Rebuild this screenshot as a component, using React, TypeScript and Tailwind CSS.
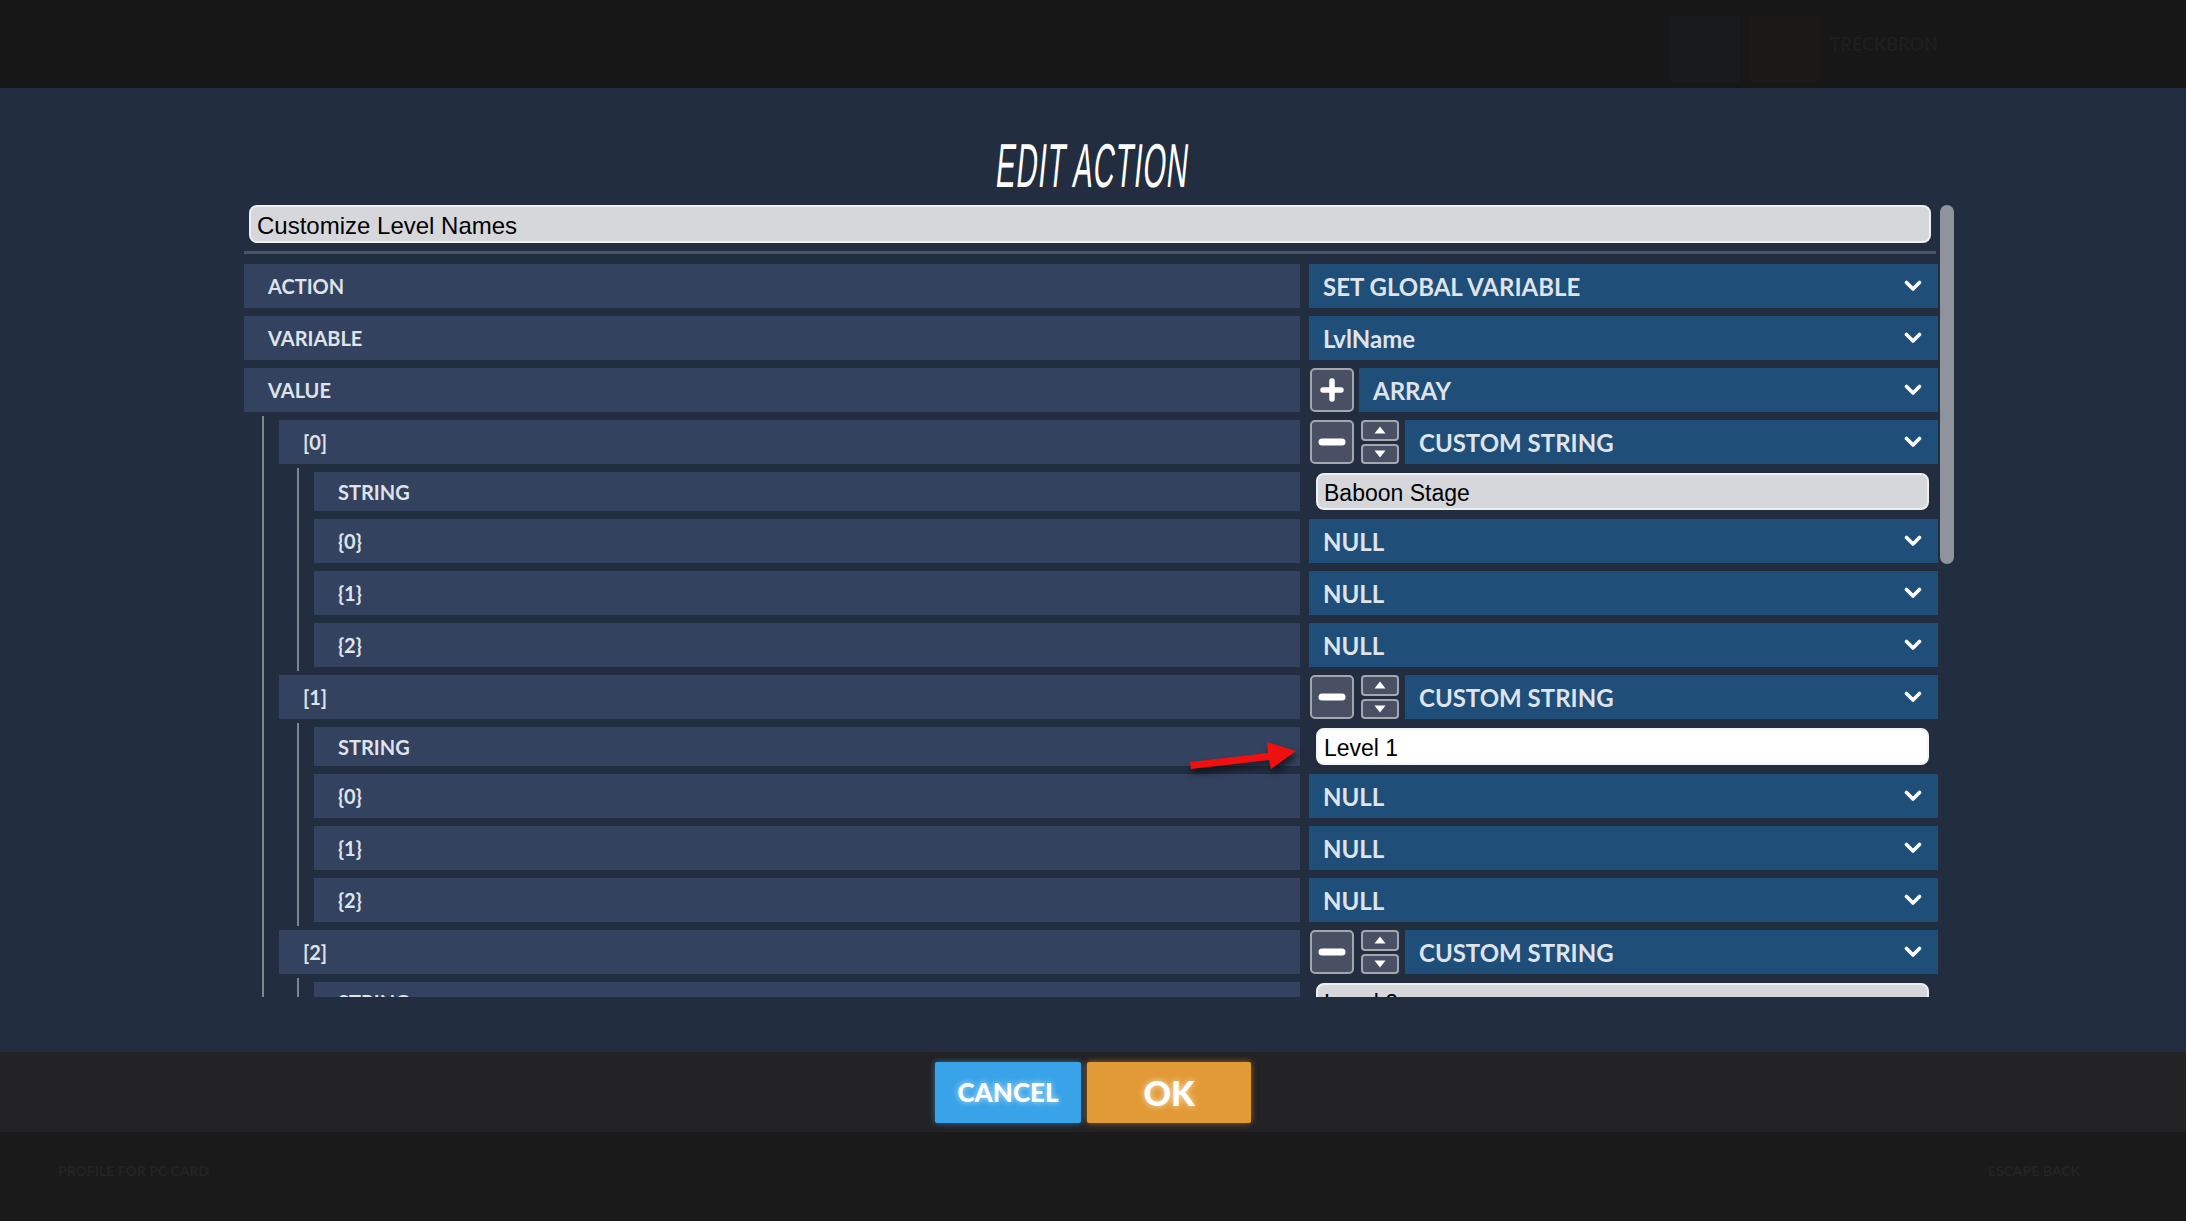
import React from 'react';

const labelFont = "font-['Lato','Noto_Sans',sans-serif] font-bold";
const inputFont = "font-['Liberation_Sans','Arial',sans-serif]";

function Chevron() {
  return (
    <svg width="18" height="12" viewBox="0 0 18 12" className="shrink-0">
      <path d="M2.5 2.5 L9 9 L15.5 2.5" fill="none" stroke="#ffffff" strokeWidth="3.6" strokeLinecap="round" strokeLinejoin="round" />
    </svg>
  );
}

function Dropdown({ text }: { text: string }) {
  return (
    <div className={`flex-1 h-full bg-[#1f4e79] flex items-center justify-between pl-[14px] pr-[16px] text-[24px] text-[#dfe3ea] ${labelFont}`}>
      <span className="leading-none pt-px">{text}</span>
      <Chevron />
    </div>
  );
}

function IconBtn({ kind }: { kind: 'plus' | 'minus' }) {
  return (
    <div className="w-[44px] h-full shrink-0 rounded-[5px] border-2 border-[#a2a6af] bg-[#4a5064] flex items-center justify-center">
      {kind === 'plus' ? (
        <svg width="24" height="24" viewBox="0 0 24 24">
          <path d="M12 3 V21 M3 12 H21" stroke="#ffffff" strokeWidth="5.5" strokeLinecap="round" />
        </svg>
      ) : (
        <svg width="28" height="10" viewBox="0 0 28 10">
          <path d="M4 5 H24" stroke="#ffffff" strokeWidth="7" strokeLinecap="round" />
        </svg>
      )}
    </div>
  );
}

function Stepper() {
  return (
    <div className="w-[38px] h-full shrink-0 flex flex-col gap-[3px]">
      <div className="flex-1 rounded-[4px] border-2 border-[#a2a6af] bg-[#4a5064] flex items-center justify-center">
        <svg width="12" height="8" viewBox="0 0 12 8">
          <path d="M6 0.5 L11.5 7.5 H0.5 Z" fill="#ffffff" />
        </svg>
      </div>
      <div className="flex-1 rounded-[4px] border-2 border-[#a2a6af] bg-[#4a5064] flex items-center justify-center">
        <svg width="12" height="8" viewBox="0 0 12 8">
          <path d="M0.5 0.5 H11.5 L6 7.5 Z" fill="#ffffff" />
        </svg>
      </div>
    </div>
  );
}

function TextField({ value, white }: { value: string; white?: boolean }) {
  return (
    <div
      className={`flex-1 ml-[7px] mr-[9px] my-px rounded-[8px] border-2 flex items-center pl-[6px] pt-[3px] text-[23px] text-black ${inputFont} ${
        white ? 'bg-white border-[#f4f4f4]' : 'bg-[#d6d7db] border-[#eeeff1]'
      }`}
    >
      <span className="leading-none">{value}</span>
    </div>
  );
}

function Row({ label, short, children }: { label: string; short?: boolean; children: React.ReactNode }) {
  return (
    <div className={`flex gap-[9px] shrink-0 ${short ? 'h-[39px]' : 'h-[44px]'}`}>
      <div className={`flex-1 bg-[#33425f] flex items-center pl-6 text-[20px] text-[#dfe3ea] ${labelFont}`}>
        <span className="leading-none">{label}</span>
      </div>
      <div className="w-[629px] shrink-0 flex items-stretch">{children}</div>
    </div>
  );
}

function Group({ children }: { children: React.ReactNode }) {
  return (
    <div className="-my-1 py-1 ml-[18px] border-l-2 border-[#7f858f] pl-[15px] flex flex-col gap-2">{children}</div>
  );
}

function ArrayItem({ index, value, white }: { index: number; value: string; white?: boolean }) {
  return (
    <>
      <Row label={`[${index}]`}>
        <div className="ml-px flex items-stretch gap-[7px] h-full">
          <IconBtn kind="minus" />
          <Stepper />
        </div>
        <div className="ml-[6px] flex-1 flex">
          <Dropdown text="CUSTOM STRING" />
        </div>
      </Row>
      <Group>
        <Row label="STRING" short>
          <TextField value={value} white={white} />
        </Row>
        <Row label="{0}">
          <Dropdown text="NULL" />
        </Row>
        <Row label="{1}">
          <Dropdown text="NULL" />
        </Row>
        <Row label="{2}">
          <Dropdown text="NULL" />
        </Row>
      </Group>
    </>
  );
}

export default function App() {
  return (
    <div className="relative w-[2186px] h-[1221px] flex flex-col overflow-hidden bg-[#1a1a1a]">
      {/* top bar (dimmed game menu behind the dialog) */}
      <div className="h-[88px] shrink-0 bg-[#171717] flex items-end justify-end pr-[248px] pb-[6px]">
        <div className="flex items-end gap-[10px] opacity-50">
          <div className="w-[70px] h-[66px] bg-[#1b1e22]" />
          <div className="w-[70px] h-[66px] bg-[#1f1c18]" />
          <div className={`mb-[24px] text-[18px] text-[#262626] ${labelFont}`}>TRECKBRON</div>
        </div>
      </div>

      {/* dialog */}
      <div className="flex-1 bg-[#232d40] flex flex-col">
        <div className="pt-[46px] h-[110px] shrink-0 flex items-center justify-center">
          <span className="inline-block text-[62px] leading-none text-white font-['Liberation_Sans',sans-serif] scale-x-[0.47] -skew-x-12 tracking-[2px]">
            EDIT ACTION
          </span>
        </div>

        <div className="mt-[7px] ml-[244px] flex h-[792px]">
          <div className="w-[1694px] h-full overflow-hidden flex flex-col">
            <div className="ml-[5px] mr-[7px] h-[38px] shrink-0 rounded-[8px] border-2 border-[#eeeff1] bg-[#d6d7db] flex items-center pl-[6px] pt-[3px] text-[24px] text-black font-['Liberation_Sans',sans-serif]">
              <span className="leading-none">Customize Level Names</span>
            </div>
            <div className="mt-2 mr-[2px] h-[3px] shrink-0 bg-[#4a5467]" />

            <div className="mt-[10px] flex flex-col gap-2">
              <Row label="ACTION">
                <Dropdown text="SET GLOBAL VARIABLE" />
              </Row>
              <Row label="VARIABLE">
                <Dropdown text="LvlName" />
              </Row>
              <Row label="VALUE">
                <div className="ml-px h-full flex">
                  <IconBtn kind="plus" />
                </div>
                <div className="ml-[5px] flex-1 flex">
                  <Dropdown text="ARRAY" />
                </div>
              </Row>
              <Group>
                <ArrayItem index={0} value="Baboon Stage" />
                <ArrayItem index={1} value="Level 1" white />
                <ArrayItem index={2} value="Level 2" />
              </Group>
            </div>
          </div>

          <div className="ml-[2px] w-[14px]">
            <div className="h-[359px] rounded-full bg-[#8e939c]" />
          </div>
        </div>
      </div>

      {/* button bar */}
      <div className="h-[80px] shrink-0 bg-[#232225] flex justify-center pt-[10px] gap-[6px]">
        <button className="w-[146px] h-[61px] rounded-[2px] bg-[#38a3e8] shadow-[0_0_6px_rgba(56,163,232,0.6)] text-white text-[26px] font-['Lato',sans-serif] font-black [text-shadow:0_0_6px_rgba(255,255,255,0.7)]">
          CANCEL
        </button>
        <button className="w-[164px] h-[61px] rounded-[2px] bg-[#e29a36] shadow-[0_0_6px_rgba(226,154,54,0.6)] text-white text-[34px] font-['Lato',sans-serif] font-black [text-shadow:0_0_6px_rgba(255,255,255,0.7)]">
          OK
        </button>
      </div>

      {/* dimmed footer */}
      <div className="h-[89px] shrink-0 bg-[#1a1a1a] flex items-start justify-between px-[58px] pt-[28px] text-[14px] text-[#242424] font-['Lato',sans-serif] font-bold">
        <span>PROFILE FOR PC CARD</span>
        <span className="mr-[48px]">ESCAPE BACK</span>
      </div>

      {/* red annotation arrow */}
      <svg
        className="absolute left-[1180px] top-[730px] drop-shadow-[2px_5px_3px_rgba(0,0,0,0.55)]"
        width="130"
        height="50"
        viewBox="0 0 130 50"
      >
        <polygon points="10,32 88,23 87,12 116,21 91,39 89,30 11,39" fill="#f01010" />
      </svg>
    </div>
  );
}
